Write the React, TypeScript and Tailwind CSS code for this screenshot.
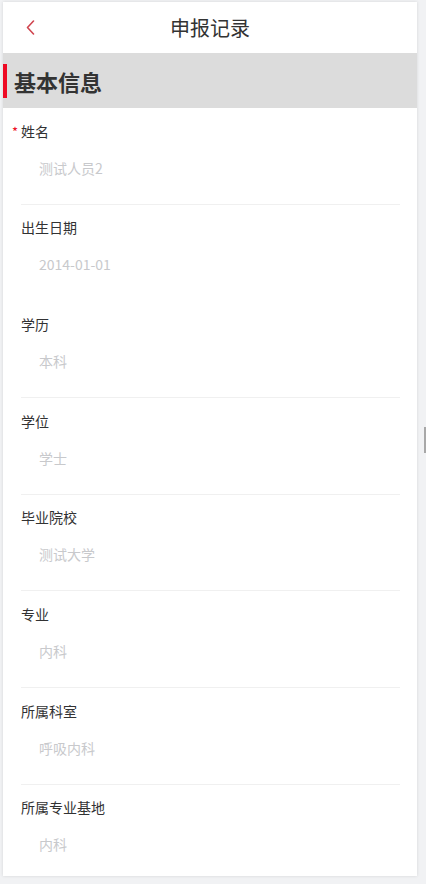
import React from "react";

const fields: { label: string; value: string; required?: boolean; noLine?: boolean }[] = [
  { label: "姓名", value: "测试人员2", required: true },
  { label: "出生日期", value: "2014-01-01", noLine: true },
  { label: "学历", value: "本科" },
  { label: "学位", value: "学士" },
  { label: "毕业院校", value: "测试大学" },
  { label: "专业", value: "内科" },
  { label: "所属科室", value: "呼吸内科" },
  { label: "所属专业基地", value: "内科", noLine: true },
];

export default function App() {
  return (
    <div
      className="relative w-[426px] h-[884px] bg-[#f1f2f4] pt-[2px] pl-[3px] pr-[9px] pb-[8px] overflow-hidden"
      style={{ fontFamily: '"Noto Sans CJK SC", "Noto Sans", sans-serif' }}
    >
      <div className="h-full bg-white flex flex-col overflow-hidden shadow-[0_0_3px_rgba(0,0,0,0.12)]">
        <div className="shrink-0 h-[51px] grid grid-cols-[1fr_auto_1fr] items-center">
          <div className="pl-[23px] flex items-center">
            <svg width="9" height="15" viewBox="0 0 9 15" fill="none">
              <path d="M7.5 1 L1.5 7.5 L7.5 14" stroke="#d0454f" strokeWidth="1.6" strokeLinecap="round" strokeLinejoin="round" />
            </svg>
          </div>
          <div className="text-[20px] leading-[28px] text-[#333]">申报记录</div>
          <div />
        </div>
        <div className="shrink-0 h-[55px] bg-[#dcdcdc] flex items-center">
          <div className="w-[4px] h-[34px] bg-[#ee0a24]" />
          <div className="ml-[7px] text-[22px] leading-[30px] font-bold text-[#333]">基本信息</div>
        </div>
        <div className="shrink-0 pl-[18px] pr-[17px]">
          {fields.map((f, i) => (
            <div
              key={i}
              className={`pt-[12.67px] pb-[26px] border-b ${f.noLine ? "border-transparent" : "border-[#f0f0f0]"}`}
            >
              <div className="relative h-5 text-[14px] leading-5 text-[#323233]">
                {f.required && (
                  <span className="absolute left-[-9px] top-[1px] text-[13px] text-[#ee0a24]">*</span>
                )}
                {f.label}
              </div>
              <div className="mt-[17px] pl-[18px] h-5 text-[14px] leading-5 text-[#c8c9cc]">{f.value}</div>
            </div>
          ))}
        </div>
      </div>
      <div className="absolute right-0 top-[427px] w-[2px] h-[26px] bg-[#a8a8a8]" />
    </div>
  );
}
